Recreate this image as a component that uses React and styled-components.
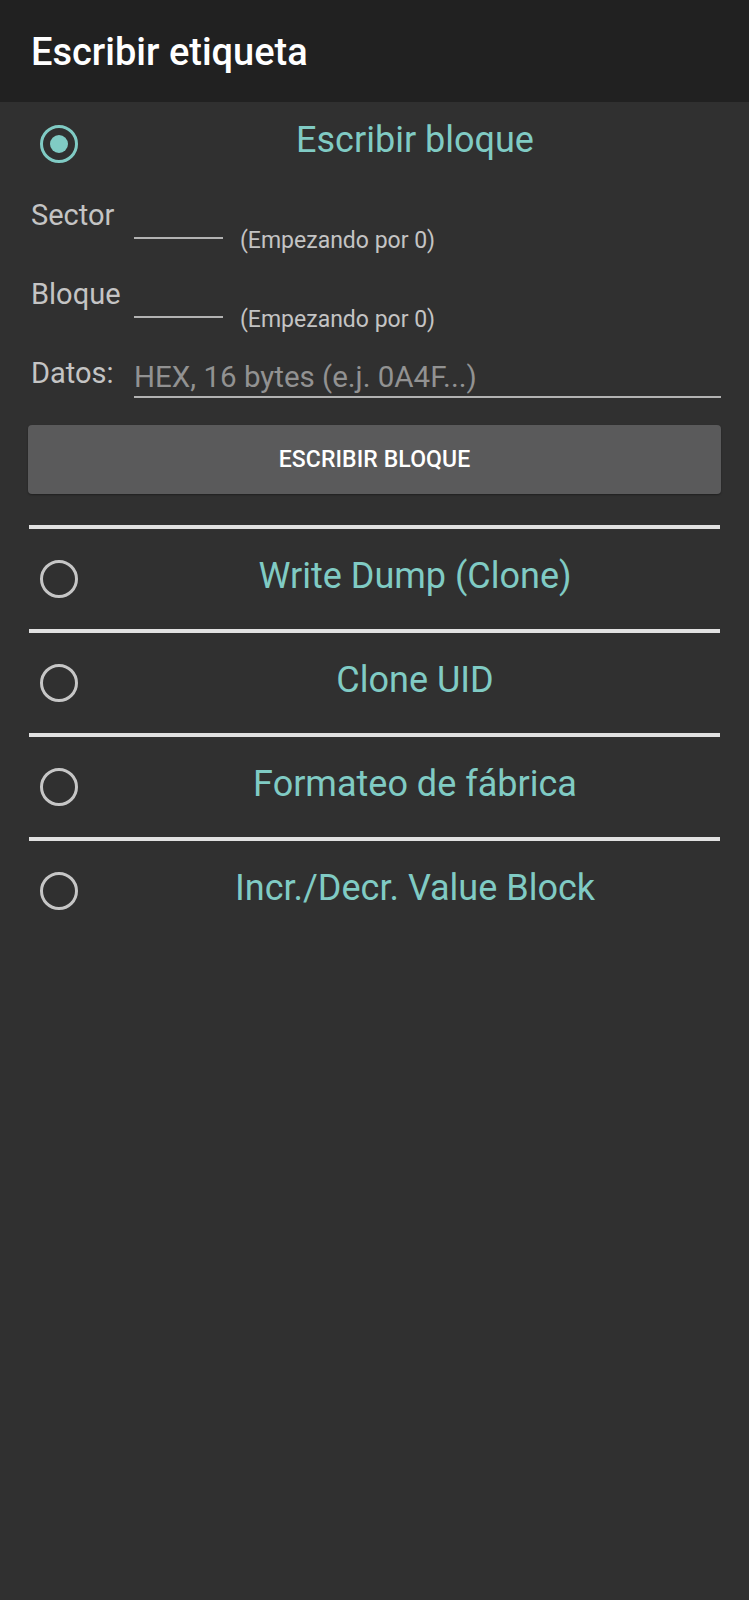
import React from "react";
import styled, { createGlobalStyle } from "styled-components";

const Global = createGlobalStyle`
  html, body {
    margin: 0;
    padding: 0;
    background: #303030;
  }
  body {
    font-family: Roboto, "Noto Sans", "Liberation Sans", sans-serif;
    -webkit-font-smoothing: antialiased;
  }
  * { box-sizing: border-box; }
`;

const Screen = styled.div`
  width: 749px;
  min-height: 1600px;
  background: #303030;
  display: flex;
  flex-direction: column;
`;

const AppBar = styled.header`
  height: 102px;
  background: #212121;
  display: flex;
  align-items: center;
  padding: 2px 0 0 31px;
`;

const Title = styled.h1`
  margin: 0;
  font-size: 38px;
  font-weight: 500;
  color: #ffffff;
  line-height: normal;
`;

const Content = styled.main`
  display: flex;
  flex-direction: column;
  padding: 0 28px 0 29px;
`;

const OptionRow = styled.label`
  display: flex;
  align-items: center;
  height: ${(p) => p.$h}px;
  cursor: pointer;
`;

const RadioCol = styled.span`
  width: 80px;
  flex: none;
  display: flex;
  align-items: center;
  padding-left: 11px;
`;

const Radio = styled.span`
  width: 38px;
  height: 38px;
  border-radius: 50%;
  border: 3.8px solid ${(p) => (p.$checked ? "#80cbc4" : "#c6c6c6")};
  display: flex;
  align-items: center;
  justify-content: center;
  &::after {
    content: "";
    width: 18px;
    height: 18px;
    border-radius: 50%;
    background: ${(p) => (p.$checked ? "#80cbc4" : "transparent")};
  }
`;

const OptionText = styled.span`
  flex: 1;
  text-align: center;
  font-size: 36px;
  color: #80cbc4;
  line-height: normal;
  margin-bottom: 7px;
`;

const FieldRow = styled.div`
  display: flex;
  align-items: flex-start;
  height: ${(p) => p.$h}px;
  padding-left: 2px;
`;

const FieldLabel = styled.span`
  width: 103px;
  flex: none;
  margin-top: 13px;
  font-size: 29px;
  line-height: 34px;
  color: #c4c4c4;
`;

const LineInput = styled.input`
  flex: ${(p) => (p.$grow ? "1" : "none")};
  width: ${(p) => (p.$grow ? "auto" : "89px")};
  min-width: 0;
  height: ${(p) => (p.$grow ? 41 : 40)}px;
  margin-top: 14px;
  padding: 0;
  border: none;
  border-bottom: 2px solid #b2b2b2;
  background: transparent;
  font-family: inherit;
  font-size: ${(p) => (p.$grow ? 29.5 : 29)}px;
  color: #e0e0e0;
  outline: none;
  &::placeholder {
    color: #929292;
  }
`;

const HintText = styled.span`
  margin: 42px 0 0 17px;
  font-size: 23px;
  line-height: normal;
  color: #c4c4c4;
  white-space: nowrap;
`;

const ActionButton = styled.button`
  margin-top: 26px;
  margin-left: -1px;
  height: 69px;
  width: 693px;
  border: none;
  border-radius: 4px;
  background: #5a5a5b;
  box-shadow: 0 1px 2px rgba(0, 0, 0, 0.35);
  color: #ffffff;
  font-family: inherit;
  font-size: 23px;
  font-weight: 500;
  letter-spacing: 0.1px;
  text-transform: uppercase;
  padding: 0 0 1px 0;
`;

const Divider = styled.hr`
  margin: ${(p) => p.$top || 0}px 0 0 0;
  width: 691px;
  height: 4px;
  border: none;
  background: #e1e1e1;
`;

const options = [
  "Write Dump (Clone)",
  "Clone UID",
  "Formateo de fábrica",
  "Incr./Decr. Value Block",
];

export default function App() {
  return (
    <>
      <Global />
      <Screen>
        <AppBar>
          <Title>Escribir etiqueta</Title>
        </AppBar>
        <Content>
          <OptionRow $h={83}>
            <RadioCol>
              <Radio $checked />
            </RadioCol>
            <OptionText>Escribir bloque</OptionText>
          </OptionRow>

          <FieldRow $h={79}>
            <FieldLabel>Sector</FieldLabel>
            <LineInput />
            <HintText>(Empezando por 0)</HintText>
          </FieldRow>
          <FieldRow $h={79}>
            <FieldLabel>Bloque</FieldLabel>
            <LineInput />
            <HintText>(Empezando por 0)</HintText>
          </FieldRow>
          <FieldRow $h={56}>
            <FieldLabel>Datos:</FieldLabel>
            <LineInput $grow placeholder="HEX, 16 bytes (e.j. 0A4F...)" />
          </FieldRow>

          <ActionButton>Escribir bloque</ActionButton>

          {options.map((o, i) => (
            <React.Fragment key={o}>
              <Divider $top={i === 0 ? 31 : 0} />
              <OptionRow $h={100}>
                <RadioCol>
                  <Radio />
                </RadioCol>
                <OptionText>{o}</OptionText>
              </OptionRow>
            </React.Fragment>
          ))}
        </Content>
      </Screen>
    </>
  );
}
